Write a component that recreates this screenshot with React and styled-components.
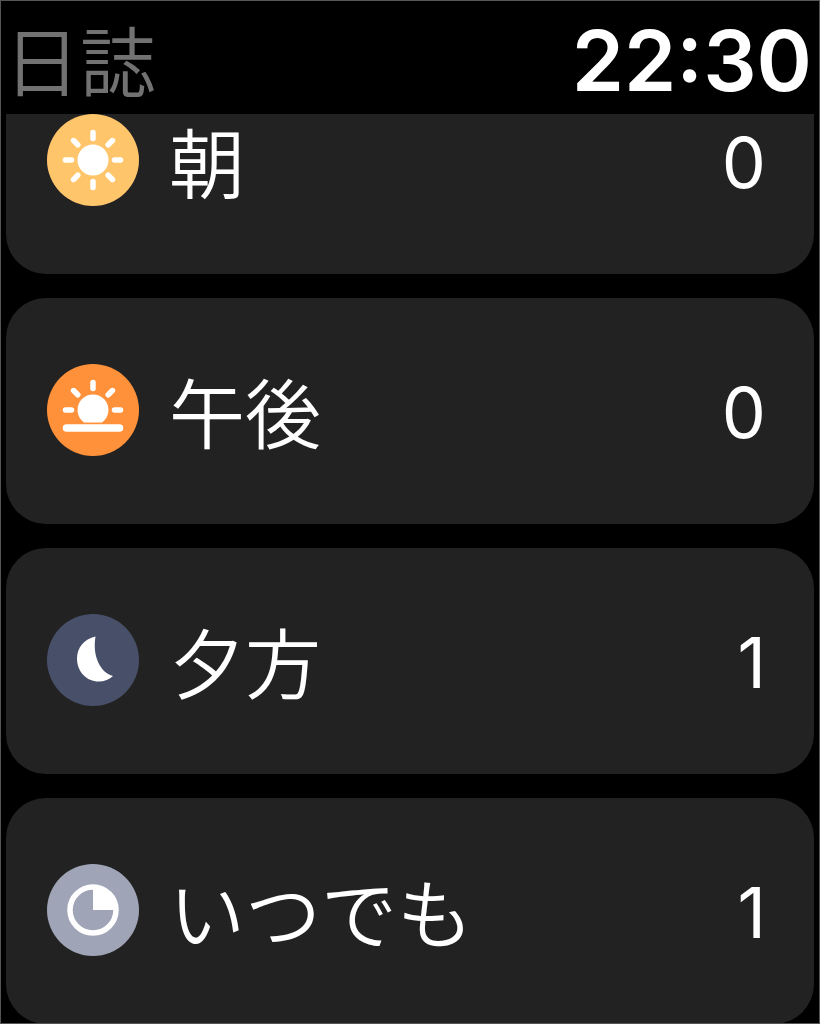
import React from "react";
import styled, { createGlobalStyle } from "styled-components";

const GlobalStyle = createGlobalStyle`
  *, *::before, *::after {
    box-sizing: border-box;
  }
  body {
    margin: 0;
    background: #000;
    color: #fff;
    font-family: Inter, "Noto Sans CJK JP", sans-serif;
  }
`;

const Screen = styled.main`
  min-height: 100vh;
  outline: 1px solid #555;
  outline-offset: -1px;
  background: #000;
`;

const Header = styled.header`
  display: flex;
  align-items: center;
  justify-content: space-between;
  height: 114px;
  padding: 2px 8px 0 4px;
`;

const Title = styled.h1`
  margin: 0;
  color: #727272;
  font-family: "Noto Sans CJK JP", sans-serif;
  font-size: 76px;
  font-weight: 350;
  line-height: 96px;
`;

const Clock = styled.time`
  padding-top: 6px;
  font-size: 84px;
  font-weight: 600;
  line-height: 96px;
`;

const List = styled.ul`
  display: flex;
  flex-direction: column;
  gap: 24px;
  margin: 0;
  padding: 0 6px;
  list-style: none;
`;

const Row = styled.button`
  display: flex;
  align-items: center;
  width: 100%;
  padding: ${(p) => (p.$scrolled ? "0" : "66px")} 48px 68px 41px;
  border: 0;
  border-radius: ${(p) => (p.$scrolled ? "0 0 40px 40px" : "40px")};
  background: #222;
  color: #fff;
  font-family: inherit;
  text-align: left;
`;

const Badge = styled.svg`
  flex: none;
  display: block;
  width: 92px;
  height: 92px;
`;

const Label = styled.span`
  flex: 1;
  margin-left: 30px;
  font-family: "Noto Sans CJK JP", sans-serif;
  font-size: 76px;
  font-weight: 350;
  line-height: 92px;
`;

const Count = styled.span`
  padding-top: 6px;
  font-size: 70px;
  font-weight: 400;
  line-height: 84px;
`;

function Rays({ angles }) {
  return angles.map((a) => (
    <path
      key={a}
      d="M46 18.5v6"
      stroke="#fff"
      strokeWidth="5.5"
      strokeLinecap="round"
      transform={`rotate(${a} 46 46)`}
    />
  ));
}

function SunIcon() {
  return (
    <Badge viewBox="0 0 92 92" aria-hidden="true">
      <circle cx="46" cy="46" r="46" fill="#ffc56b" />
      <circle cx="46" cy="46" r="15.5" fill="#fff" />
      <Rays angles={[0, 45, 90, 135, 180, 225, 270, 315]} />
    </Badge>
  );
}

function SunsetIcon() {
  return (
    <Badge viewBox="0 0 92 92" aria-hidden="true">
      <circle cx="46" cy="46" r="46" fill="#ff913a" />
      <path d="M37 58.5a15.5 15.5 0 1 1 18 0z" fill="#fff" />
      <Rays angles={[0, 45, 90, 270, 315]} />
      <path d="M19.5 64h53" stroke="#fff" strokeWidth="7.5" strokeLinecap="round" />
    </Badge>
  );
}

function MoonIcon() {
  return (
    <Badge viewBox="0 0 92 92" aria-hidden="true">
      <circle cx="46" cy="46" r="46" fill="#485069" />
      <path
        d="M48.500 22.500C37 25 30 34 30 44.500C30 58 40 67.500 51.500 67.500C57.500 67.500 62.500 65.500 66 62C54 59 45 43 48.500 22.500Z"
        fill="#fff"
      />
    </Badge>
  );
}

function AnytimeIcon() {
  return (
    <Badge viewBox="0 0 92 92" aria-hidden="true">
      <circle cx="46" cy="46" r="46" fill="#9fa4b7" />
      <circle cx="46" cy="46" r="23" fill="none" stroke="#fff" strokeWidth="5.5" />
      <path d="M46 46V22a24 24 0 0 1 24 24z" fill="#fff" />
    </Badge>
  );
}

const periods = [
  { label: "朝", count: 0, Icon: SunIcon, scrolled: true },
  { label: "午後", count: 0, Icon: SunsetIcon },
  { label: "夕方", count: 1, Icon: MoonIcon },
  { label: "いつでも", count: 1, Icon: AnytimeIcon },
];

export default function App() {
  return (
    <>
      <GlobalStyle />
      <Screen>
        <Header>
          <Title lang="ja">日誌</Title>
          <Clock dateTime="22:30">22:30</Clock>
        </Header>
        <List lang="ja">
          {periods.map(({ label, count, Icon, scrolled }) => (
            <li key={label}>
              <Row type="button" $scrolled={scrolled}>
                <Icon />
                <Label>{label}</Label>
                <Count>{count}</Count>
              </Row>
            </li>
          ))}
        </List>
      </Screen>
    </>
  );
}
